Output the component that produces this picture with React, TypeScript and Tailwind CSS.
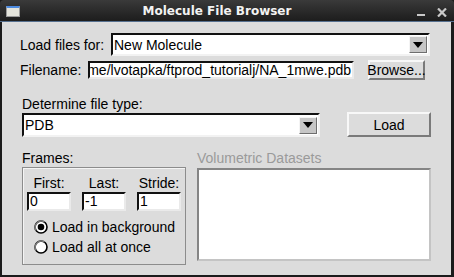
import React from 'react';

const font = { fontFamily: '"Liberation Sans", Arial, sans-serif' };

// Tk-style dropdown arrow button
const ArrowButton = () => (
  <div className="flex h-[17px] w-[18px] shrink-0 items-center justify-center border border-t-[#f4f4f4] border-l-[#f4f4f4] border-r-[#6e6e6e] border-b-[#6e6e6e] bg-[#c6c6c6]">
    <svg width="10" height="6" viewBox="0 0 10 6">
      <path d="M0 0 H10 L5 6 Z" fill="#000" />
    </svg>
  </div>
);

const Dropdown = ({ value, className }: { value: string; className: string }) => (
  <div
    className={`flex items-center justify-between border-2 border-t-[#111] border-l-[#111] border-r-[#f2f2f2] border-b-[#f2f2f2] bg-white pl-[1px] pr-[1px] ${className}`}
  >
    <span className="text-[14px] leading-[16px] text-black">{value}</span>
    <ArrowButton />
  </div>
);

const Entry = ({ value, className }: { value: string; className: string }) => (
  <div
    className={`flex items-center overflow-x-clip overflow-y-visible whitespace-nowrap border-2 border-t-[#111] border-l-[#111] border-r-[#eaeaea] border-b-[#eaeaea] bg-white pl-[1px] text-[14px] leading-[15px] text-black ${className}`}
  >
    {value}
  </div>
);

const Button = ({ label, className }: { label: string; className: string }) => (
  <div
    className={`flex items-center justify-center border-2 border-t-[#f8f8f8] border-l-[#f8f8f8] border-r-[#7a7a7a] border-b-[#7a7a7a] bg-[#dcdcdc] text-[14px] leading-[16px] text-black ${className}`}
  >
    {label}
  </div>
);

const Radio = ({ checked, label }: { checked: boolean; label: string }) => (
  <div className="flex h-[20px] items-center gap-[4px] pl-[11px]">
    <svg width="14" height="14" viewBox="0 0 14 14">
      <circle cx="7" cy="7" r="6" fill="#fff" stroke="#000" strokeWidth="1.6" />
      <path d="M2.2 10.5 A6 6 0 0 1 10.5 2.2" fill="none" stroke="#7a7a7a" strokeWidth="1.6" />
      {checked && <circle cx="7" cy="7" r="3.3" fill="#000" />}
    </svg>
    <span className="text-[14px] leading-[16px] text-black">{label}</span>
  </div>
);

export default function App() {
  return (
    <div className="h-[277px] w-[454px] bg-[#1b1b1b]" style={font}>
      {/* title bar */}
      <div className="relative flex h-[22px] items-center justify-center rounded-t-[4px] border-b border-[#56708f] bg-gradient-to-b from-[#3a3a3a] to-[#1d1d1d] pr-[20px]">
        <div className="absolute left-[6px] top-[6px] h-[11px] w-[14px] border border-[#9a9a9a] border-t-2 border-t-[#4d8be0] bg-[#e4e4dc]" />
        <span
          className="text-[12px] font-bold leading-[14px] text-[#f2f2f2]"
          style={{ fontFamily: '"DejaVu Sans", sans-serif' }}
        >
          Molecule File Browser
        </span>
        <div className="absolute left-[417px] top-[14px] h-[2px] w-[8px] bg-[#c8c8c8]" />
        <svg className="absolute left-[437px] top-[8px]" width="10" height="9" viewBox="0 0 10 9">
          <path d="M1 0.5 L9 8.5 M9 0.5 L1 8.5" stroke="#c8c8c8" strokeWidth="2.2" />
        </svg>
      </div>

      {/* body */}
      <div className="flex h-[255px] flex-col border-b-2 border-l-2 border-r-[3px] border-[#1b1b1b] bg-[#dcdcdc] pl-[18px] pt-[11px]">
        <div className="flex h-[23px] items-center">
          <span className="w-[91px] text-[14px] leading-[16px] text-black">Load files for:</span>
          <Dropdown value="New Molecule" className="h-[23px] w-[319px]" />
        </div>

        <div className="mt-[4px] flex h-[20px] items-center">
          <span className="w-[68px] text-[14px] leading-[16px] text-black">Filename:</span>
          <Entry
            value="me/lvotapka/ftprod_tutorialj/NA_1mwe.pdb"
            className="h-[18px] w-[266px] justify-end pr-[1px]"
          />
          <Button label="Browse..." className="ml-[14px] h-[20px] w-[57px]" />
        </div>

        <div className="ml-[2px] mt-[16px] flex items-end">
          <div className="flex flex-col">
            <span className="text-[14px] leading-[16px] text-black">Determine file type:</span>
            <Dropdown value="PDB" className="mt-[1px] h-[24px] w-[298px]" />
          </div>
          <Button label="Load" className="ml-[27px] h-[25px] w-[84px]" />
        </div>

        <div className="ml-[2px] mt-[13px] flex gap-[11px]">
          <div className="flex w-[164px] flex-col">
            <span className="text-[14px] leading-[16px] text-black">Frames:</span>
            <div className="mt-[1px] flex h-[98px] flex-col border border-[#8c8c8c] pt-[7px] shadow-[inset_1px_1px_0_#f4f4f4]">
              <div className="flex gap-[11px] pl-[4px]">
                {[
                  ['First:', '0'],
                  ['Last:', '-1'],
                  ['Stride:', '1'],
                ].map(([label, value]) => (
                  <div key={label} className="flex w-[44px] flex-col items-center">
                    <span className="text-[14px] leading-[16px] text-black">{label}</span>
                    <Entry value={value} className="mt-[1px] h-[19px] w-[44px]" />
                  </div>
                ))}
              </div>
              <div className="mt-[6px] flex flex-col">
                <Radio checked label="Load in background" />
                <Radio checked={false} label="Load all at once" />
              </div>
            </div>
          </div>

          <div className="flex w-[234px] flex-col">
            <span className="text-[14px] leading-[16px] text-[#9a9a9a]">Volumetric Datasets</span>
            <div className="mt-[2px] h-[93px] border-2 border-t-[#858585] border-l-[#858585] border-r-[#c4c4c4] border-b-[#c4c4c4] bg-white" />
          </div>
        </div>
      </div>
    </div>
  );
}
